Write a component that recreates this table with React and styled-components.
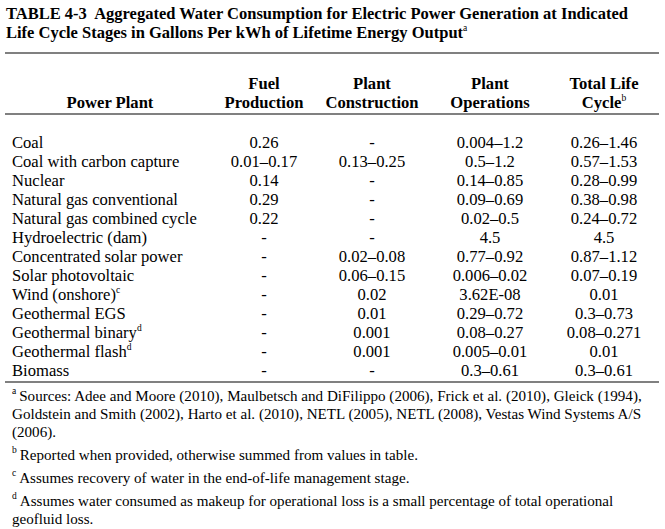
import React from 'react';
import styled, { createGlobalStyle } from 'styled-components';

const GlobalStyle = createGlobalStyle`
  html, body {
    margin: 0;
    padding: 0;
    background: #fff;
  }
  body {
    font-family: "Liberation Serif", "Times New Roman", serif;
    color: #000;
  }
`;

const Page = styled.div`
  width: 665px;
  height: 529px;
  padding: 4px 6px 0 5px;
  box-sizing: border-box;
  overflow: hidden;
`;

const Title = styled.h1`
  margin: 0;
  font-size: 16.5px;
  line-height: 19px;
  font-weight: bold;
  padding-left: 1px;
  white-space: nowrap;
`;

const Rule = styled.div`
  height: 2px;
  background: #808080;
  margin-top: ${props => props.top || 0}px;
`;

const Grid = styled.div`
  display: grid;
  grid-template-columns: 210px 98px 118px 118px 110px;
`;

const HeadRow = styled(Grid)`
  height: 58px;
  align-items: end;
  padding-bottom: 1px;
`;

const HeadCell = styled.div`
  font-weight: bold;
  font-size: 16.6px;
  line-height: 19px;
  text-align: center;
  white-space: nowrap;
`;

const Body = styled.div`
  padding-top: 18px;
  padding-bottom: 1px;
`;

const Row = styled(Grid)`
  height: 19px;
  align-items: center;
  font-size: 16.6px;
  line-height: 19px;
`;

const NameCell = styled.div`
  padding-left: 7px;
  white-space: nowrap;
`;

const Cell = styled.div`
  text-align: center;
  white-space: nowrap;
`;

const Sup = styled.sup`
  font-size: 9.5px;
  line-height: 0;
  vertical-align: ${props => props.raise || 7}px;
  font-weight: normal;
  margin-right: ${props => props.gap || 0}px;
`;

const Notes = styled.div`
  padding: 4px 0 0 7px;
`;

const Note = styled.p`
  margin: 0 0 5px;
  font-size: 15.1px;
  line-height: 18px;
  white-space: nowrap;
`;

const rows = [
  ['Coal', null, '0.26', '-', '0.004–1.2', '0.26–1.46'],
  ['Coal with carbon capture', null, '0.01–0.17', '0.13–0.25', '0.5–1.2', '0.57–1.53'],
  ['Nuclear', null, '0.14', '-', '0.14–0.85', '0.28–0.99'],
  ['Natural gas conventional', null, '0.29', '-', '0.09–0.69', '0.38–0.98'],
  ['Natural gas combined cycle', null, '0.22', '-', '0.02–0.5', '0.24–0.72'],
  ['Hydroelectric (dam)', null, '-', '-', '4.5', '4.5'],
  ['Concentrated solar power', null, '-', '0.02–0.08', '0.77–0.92', '0.87–1.12'],
  ['Solar photovoltaic', null, '-', '0.06–0.15', '0.006–0.02', '0.07–0.19'],
  ['Wind (onshore)', 'c', '-', '0.02', '3.62E-08', '0.01'],
  ['Geothermal EGS', null, '-', '0.01', '0.29–0.72', '0.3–0.73'],
  ['Geothermal binary', 'd', '-', '0.001', '0.08–0.27', '0.08–0.271'],
  ['Geothermal flash', 'd', '-', '0.001', '0.005–0.01', '0.01'],
  ['Biomass', null, '-', '-', '0.3–0.61', '0.3–0.61'],
];

export default function App() {
  return (
    <Page>
      <GlobalStyle />
      <Title>
        TABLE 4-3&nbsp; Aggregated Water Consumption for Electric Power Generation at Indicated
        <br />
        Life Cycle Stages in Gallons Per kWh of Lifetime Energy Output<Sup>a</Sup>
      </Title>
      <Rule top={10} />
      <HeadRow>
        <HeadCell>Power Plant</HeadCell>
        <HeadCell>Fuel<br />Production</HeadCell>
        <HeadCell>Plant<br />Construction</HeadCell>
        <HeadCell>Plant<br />Operations</HeadCell>
        <HeadCell>Total Life<br />Cycle<Sup>b</Sup></HeadCell>
      </HeadRow>
      <Rule />
      <Body>
        {rows.map(([name, note, ...vals]) => (
          <Row key={name}>
            <NameCell>
              {name}
              {note && <Sup>{note}</Sup>}
            </NameCell>
            {vals.map((v, i) => (
              <Cell key={i}>{v}</Cell>
            ))}
          </Row>
        ))}
      </Body>
      <Rule />
      <Notes>
        <Note>
          <Sup gap={3}>a</Sup>Sources: Adee and Moore (2010), Maulbetsch and DiFilippo (2006), Frick et al. (2010), Gleick (1994),
          <br />
          Goldstein and Smith (2002), Harto et al. (2010), NETL (2005), NETL (2008), Vestas Wind Systems A/S
          <br />
          (2006).
        </Note>
        <Note>
          <Sup gap={3}>b</Sup>Reported when provided, otherwise summed from values in table.
        </Note>
        <Note>
          <Sup gap={3}>c</Sup>Assumes recovery of water in the end-of-life management stage.
        </Note>
        <Note>
          <Sup gap={3}>d</Sup>Assumes water consumed as makeup for operational loss is a small percentage of total operational
          <br />
          geofluid loss.
        </Note>
      </Notes>
    </Page>
  );
}
